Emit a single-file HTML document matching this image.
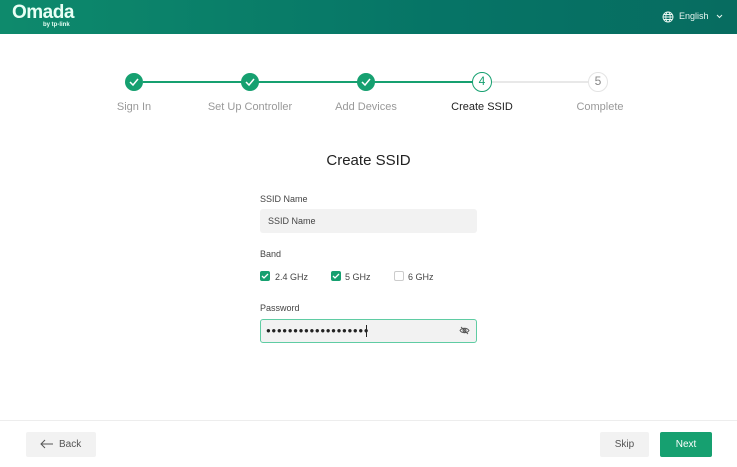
<!DOCTYPE html>
<html><head><style>
body{margin:0;width:737px;height:467px;position:relative;background:#fff;font-family:"Liberation Sans",sans-serif;overflow:hidden}
.hdr{position:absolute;left:0;top:0;width:737px;height:34px;background:linear-gradient(90deg,#0e8a6c,#067466 60%,#076c60)}
.abs{position:absolute}
.c{position:absolute;width:18px;height:18px;border-radius:50%;top:73px;box-sizing:border-box}
.done{background:#16a070}
.lbl{position:absolute;top:101px;font-size:11px;color:#999;transform:translateX(-50%);white-space:nowrap}
.inp{position:absolute;left:260px;width:217px;height:24px;background:#f2f2f2;border-radius:3px;box-sizing:border-box;font-size:9px;color:#444;padding:7px 0 0 8px}
.cb{position:absolute;top:271px;width:10px;height:10px;border-radius:2px;box-sizing:border-box}
.sm{position:absolute;font-size:9px;color:#444}
</style></head><body>
<div class="hdr">
<div class="abs" style="left:12px;top:2px;color:#e9fff5;font-size:19px;font-weight:bold;letter-spacing:-0.5px">Omada</div>
<div class="abs" style="left:43px;top:22px;color:#e9fff5;font-size:6px;font-weight:bold">by tp-link</div>
<svg class="abs" style="left:662px;top:11px" width="12" height="12" viewBox="0 0 12 12" fill="none" stroke="#eaf7f2" stroke-width="0.9"><circle cx="6" cy="6" r="5"/><ellipse cx="6" cy="6" rx="2.2" ry="5"/><path d="M1 6h10M2 3.5h8M2 8.5h8"/></svg>
<div class="abs" style="left:679px;top:11px;color:#eaf7f2;font-size:9px">English</div>
<svg class="abs" style="left:716px;top:14px" width="7" height="5" viewBox="0 0 7 5" fill="none" stroke="#eaf7f2" stroke-width="1"><path d="M1 1l2.5 2.5L6 1"/></svg>
</div>
<div class="abs" style="left:143px;top:81px;width:330px;height:2px;background:#16a070"></div>
<div class="abs" style="left:491px;top:81px;width:100px;height:2px;background:#e8e8e8"></div>
<div class="c done" style="left:125px"></div><div class="c done" style="left:241px"></div><div class="c done" style="left:357px"></div>
<svg class="abs" style="left:125px;top:73px" width="260" height="18"><g fill="none" stroke="#fff" stroke-width="1.5"><path d="M5 9l3 3 5-6"/><path d="M121 9l3 3 5-6"/><path d="M237 9l3 3 5-6"/></g></svg>
<div class="c" style="left:472px;top:72px;width:20px;height:20px;border:1.5px solid #16a070;background:#fff;color:#16a070;font-size:12px;text-align:center;line-height:17px">4</div>
<div class="c" style="left:588px;top:72px;width:20px;height:20px;border:1.5px solid #e4e4e4;background:#fff;color:#888;font-size:12px;text-align:center;line-height:17px">5</div>
<div class="lbl" style="left:134px">Sign In</div>
<div class="lbl" style="left:250px">Set Up Controller</div>
<div class="lbl" style="left:366px">Add Devices</div>
<div class="lbl" style="left:482px;color:#222">Create SSID</div>
<div class="lbl" style="left:600px">Complete</div>
<div class="abs" style="left:0;width:737px;top:152px;text-align:center;font-size:15px;color:#222">Create SSID</div>
<div class="sm" style="left:260px;top:194px">SSID Name</div>
<div class="inp" style="top:209px">SSID Name</div>
<div class="sm" style="left:260px;top:249px">Band</div>
<div class="cb" style="left:260px;background:#16a070"></div>
<div class="cb" style="left:331px;background:#16a070"></div>
<div class="cb" style="left:394px;border:1px solid #ccc"></div>
<svg class="abs" style="left:260px;top:271px" width="80" height="10"><g fill="none" stroke="#fff" stroke-width="1.3"><path d="M2 5l2 2 4-4"/><path d="M73 5l2 2 4-4"/></g></svg>
<div class="sm" style="left:275px;top:272px">2.4 GHz</div>
<div class="sm" style="left:345px;top:272px">5 GHz</div>
<div class="sm" style="left:408px;top:272px">6 GHz</div>
<div class="sm" style="left:260px;top:303px">Password</div>
<div class="inp" style="top:319px;border:1px solid #5fcca3;height:24px;padding:6px 0 0 5px;font-size:8px;color:#222;letter-spacing:0.6px;white-space:nowrap">●●●●●●●●●●●●●●●●●●●</div>
<div class="abs" style="left:366px;top:325px;width:1px;height:12px;background:#222"></div>
<svg class="abs" style="left:459px;top:326px" width="11" height="9" viewBox="0 0 11 9" fill="none" stroke="#555" stroke-width="0.9"><path d="M1 4.5C3 1.5 8 1.5 10 4.5 8 7.5 3 7.5 1 4.5z"/><circle cx="5.5" cy="4.5" r="1.5"/><path d="M2 1l7 7"/></svg>
<div class="abs" style="left:0;top:420px;width:737px;height:1px;background:#ededed"></div>
<div class="abs" style="left:26px;top:432px;width:70px;height:25px;background:#f2f2f2;border-radius:2px"></div>
<svg class="abs" style="left:40px;top:439px" width="14" height="10" viewBox="0 0 14 10" fill="none" stroke="#555" stroke-width="1"><path d="M13 5H1M5 1L1 5l4 4"/></svg>
<div class="abs" style="left:59px;top:439px;font-size:10px;color:#555">Back</div>
<div class="abs" style="left:600px;top:432px;width:49px;height:25px;background:#f2f2f2;border-radius:2px;font-size:10px;color:#555;text-align:center;line-height:25px">Skip</div>
<div class="abs" style="left:660px;top:432px;width:52px;height:25px;background:#16a070;border-radius:2px;font-size:10px;color:#fff;text-align:center;line-height:25px">Next</div>
</body></html>
